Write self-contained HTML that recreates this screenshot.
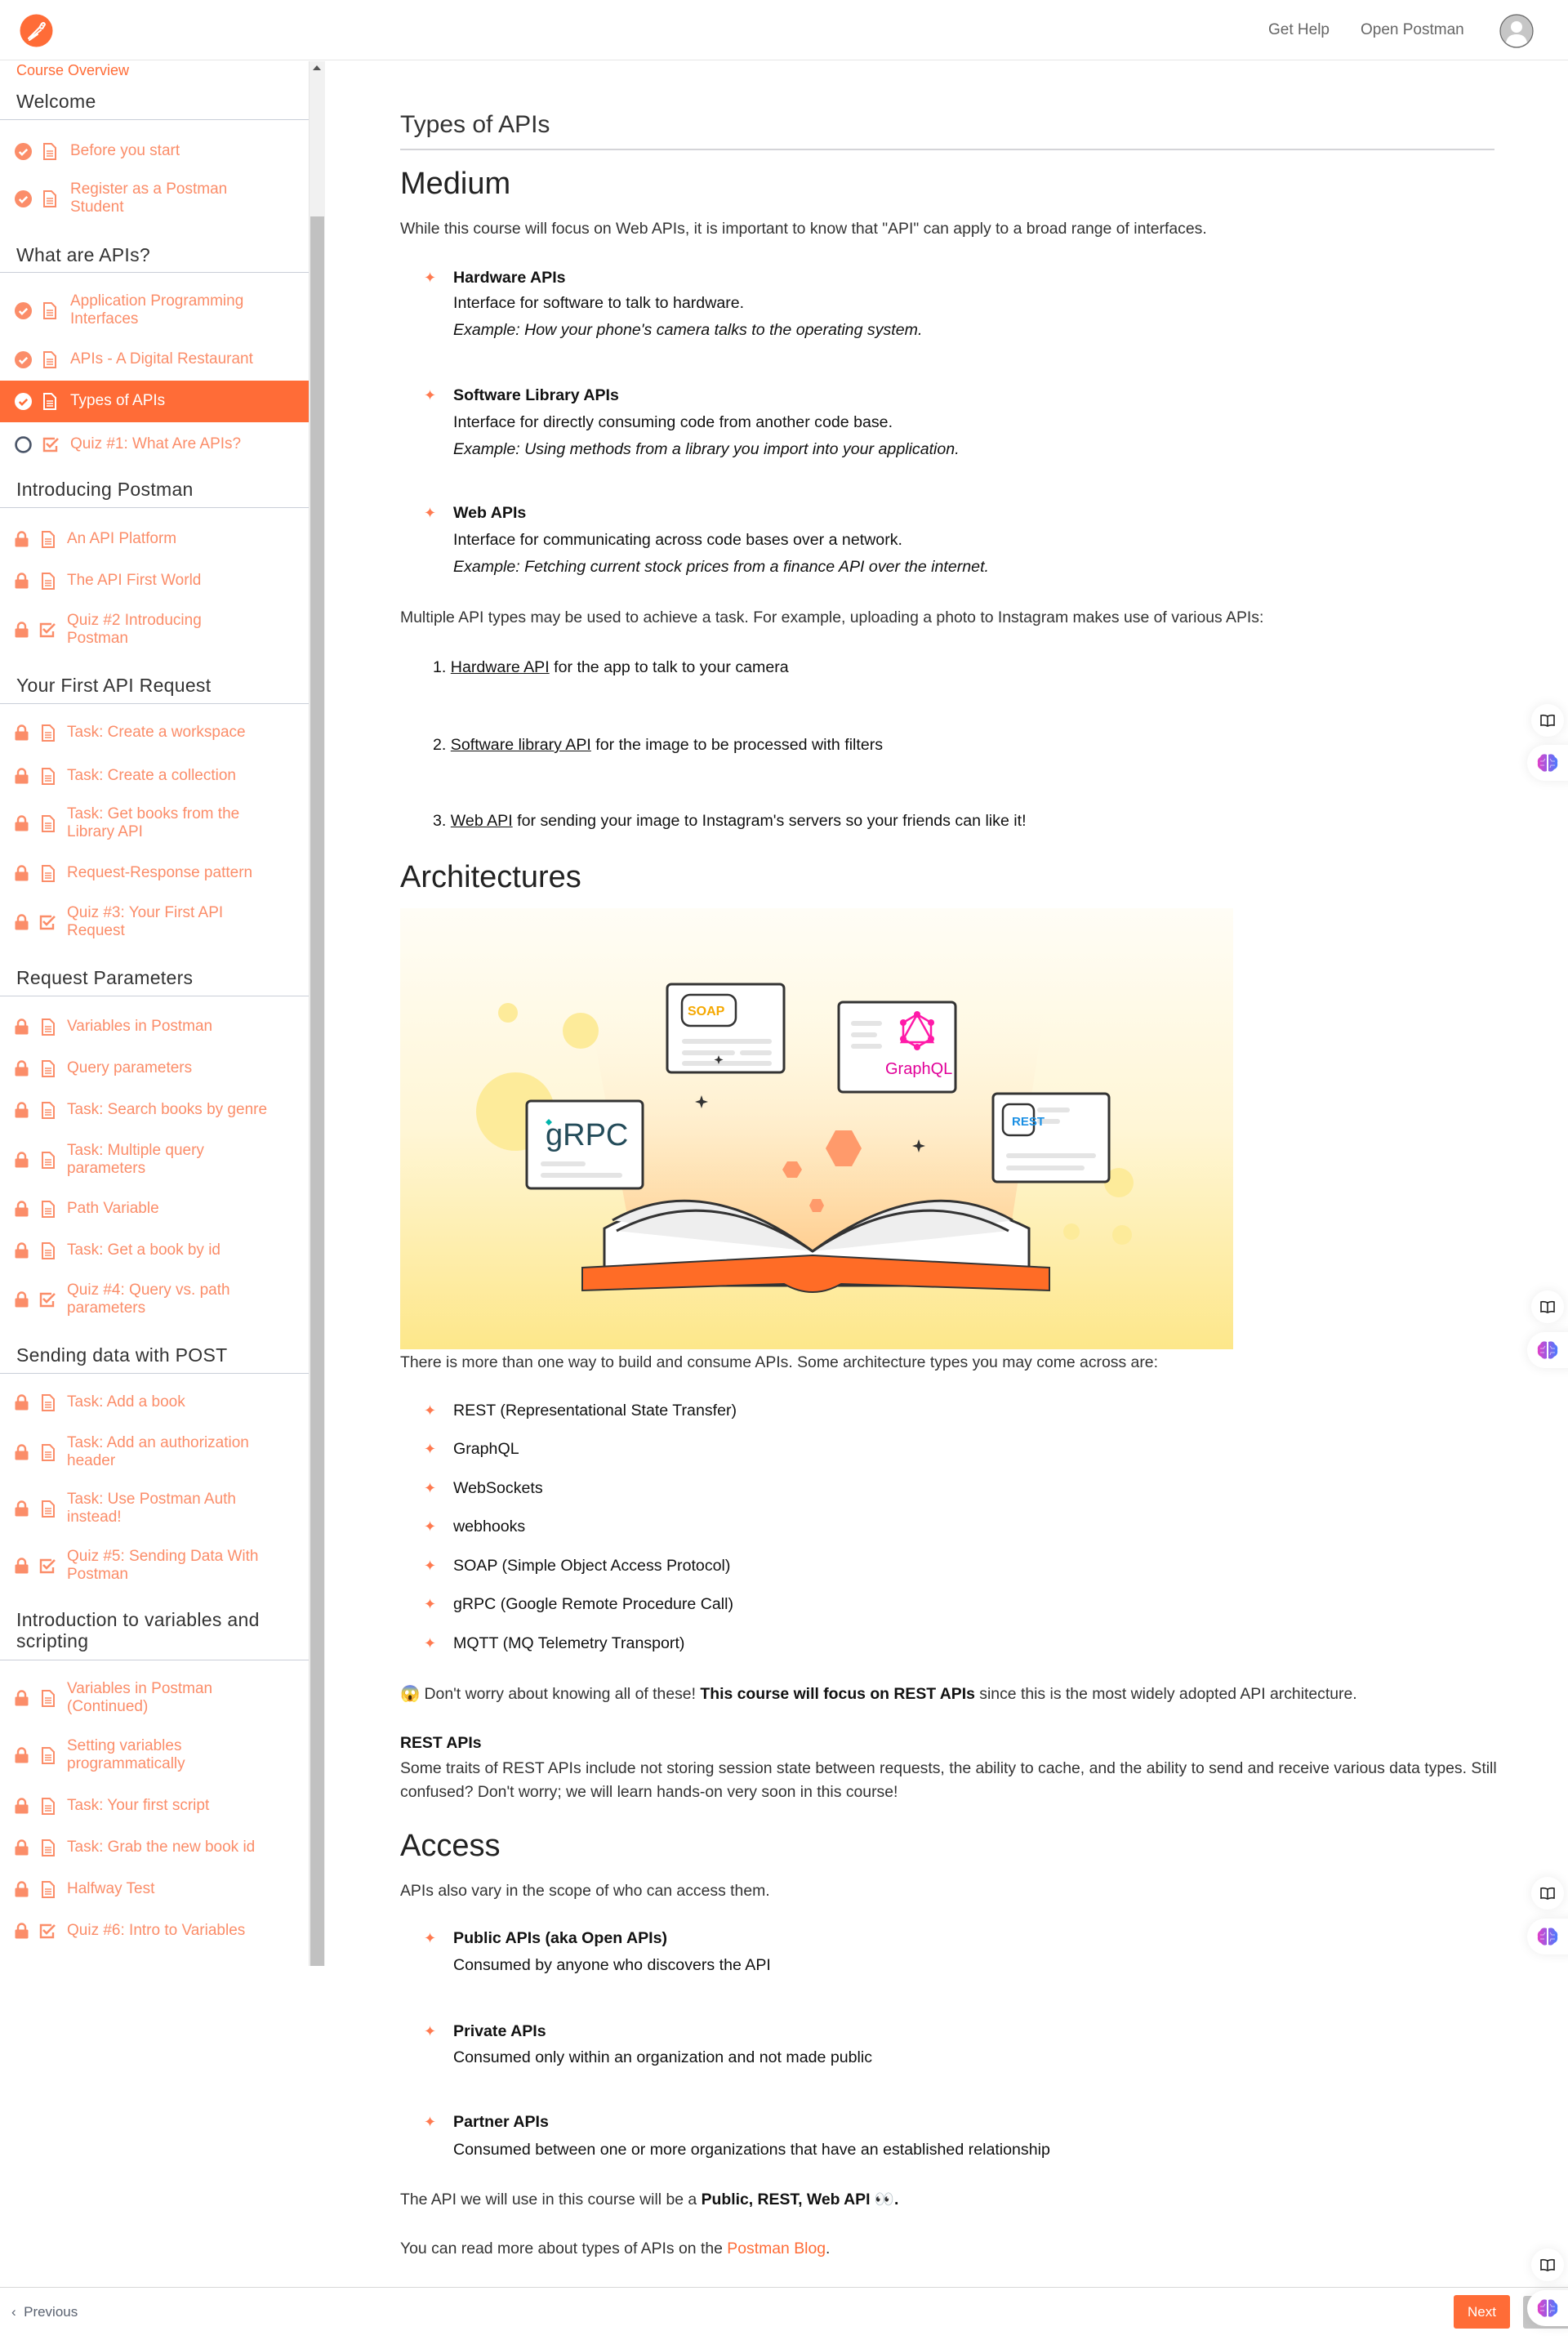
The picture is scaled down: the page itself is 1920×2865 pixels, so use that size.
<!DOCTYPE html>
<html><head><meta charset="utf-8">
<style>
*{margin:0;padding:0;box-sizing:border-box}
html,body{width:1920px;height:2865px;overflow:hidden;background:#fff;font-family:"Liberation Sans",sans-serif;color:#222;position:relative}
.a{position:absolute;white-space:nowrap}
.hdr{position:absolute;left:0;top:0;width:1920px;height:74px;border-bottom:1px solid #e6e6e6;background:#fff}
.it{position:absolute;left:0;width:378px;display:flex;align-items:center;color:#fb8d69;font-size:19px;line-height:22px}
.it .ic1{position:absolute;left:18px}
.it .ic2{position:absolute;left:50px}
.it .tx{position:absolute;left:82px;white-space:normal;width:248px}
.it.ck .ic2{left:52px}
.it.ck .tx{left:86px}
.sh{position:absolute;left:20px;font-size:23px;color:#333;line-height:28px;white-space:nowrap;letter-spacing:.3px}
.sl{position:absolute;left:0;width:378px;height:1px;background:#c9ced8}
.c{position:absolute;left:490px;font-size:19.4px;line-height:24px;color:#222;white-space:nowrap}
.h2{font-size:38px;line-height:44px;color:#222}
.st{position:absolute;left:519px;color:#ff7a50;font-size:18px;line-height:24px}
.li{position:absolute;left:555px;font-size:19.6px;line-height:24px;white-space:nowrap;color:#111}
.ex{font-style:italic}
</style></head><body>

<div class="hdr">
 <svg class="a" style="left:24px;top:17px" width="41" height="41" viewBox="0 0 41 41"><circle cx="20.5" cy="20.5" r="20" fill="#ff6c37"/><path d="M11 30 L24 17 M24 17 L27 12 Q30 10 31 13 L28 18 Z M14 29 L26 20 M12 32 L22 25" stroke="#fff" stroke-width="2" fill="none" stroke-linecap="round"/><circle cx="29" cy="12.5" r="2" fill="none" stroke="#fff" stroke-width="1.2"/></svg>
 <div class="a" style="left:1553px;top:26px;font-size:19px;color:#666">Get Help</div>
 <div class="a" style="left:1666px;top:26px;font-size:19px;color:#666">Open Postman</div>
 <svg class="a" style="left:1836px;top:17px" width="42" height="42" viewBox="0 0 42 42"><circle cx="21" cy="21" r="20" fill="#c6c6c6" stroke="#666" stroke-width="1.2"/><circle cx="21" cy="16" r="7" fill="#fff"/><path d="M8 35 Q10 25 21 25 Q32 25 34 35 Q28 40 21 40 Q14 40 8 35Z" fill="#fff"/></svg>
</div>

<div class="a" style="left:378px;top:75px;width:20px;height:2332px;background:#f1f1f1;border-left:1px solid #e5e5e5"></div>
<div class="a" style="left:380px;top:265px;width:17px;height:2142px;background:#c1c1c1"></div>
<div class="a" style="left:383px;top:80px;width:0;height:0;border-left:5px solid transparent;border-right:5px solid transparent;border-bottom:6px solid #555"></div>

<div class="a" style="left:20px;top:75px;font-size:18px;color:#ff6c37;line-height:22px">Course Overview</div>

<div class="sh" style="top:110px">Welcome</div><div class="sl" style="top:146px"></div>
<div class="sh" style="top:298px">What are APIs?</div><div class="sl" style="top:333px"></div>
<div class="sh" style="top:585px">Introducing Postman</div><div class="sl" style="top:621px"></div>
<div class="sh" style="top:825px">Your First API Request</div><div class="sl" style="top:861px"></div>
<div class="sh" style="top:1183px">Request Parameters</div><div class="sl" style="top:1219px"></div>
<div class="sh" style="top:1645px">Sending data with POST</div><div class="sl" style="top:1681px"></div>
<div class="sh" style="top:1970px;line-height:26px">Introduction to variables and<br>scripting</div><div class="sl" style="top:2032px"></div>

<div class="a" style="left:0;top:466px;width:378px;height:51px;background:#ff6c37"></div>

<div id="items"></div>
<div class="it ck" style="top:173px;height:24px"><svg class="ic1" width="21" height="21" viewBox="0 0 20 20"><circle cx="10" cy="10" r="10" fill="#fb8d69"/><path d="M5.5 10.5l3 3 6-6" stroke="#fff" stroke-width="2.4" fill="none"/></svg><svg class="ic2" width="18" height="21" viewBox="0 0 18 21"><path d="M2 1h9l5 5v14H2z" fill="none" stroke="#fb8d69" stroke-width="2"/><path d="M5 10h8M5 13h8M5 16h8" stroke="#fb8d69" stroke-width="1.5"/></svg><span class="tx">Before you start</span></div>
<div class="it ck" style="top:221px;height:44px"><svg class="ic1" width="21" height="21" viewBox="0 0 20 20"><circle cx="10" cy="10" r="10" fill="#fb8d69"/><path d="M5.5 10.5l3 3 6-6" stroke="#fff" stroke-width="2.4" fill="none"/></svg><svg class="ic2" width="18" height="21" viewBox="0 0 18 21"><path d="M2 1h9l5 5v14H2z" fill="none" stroke="#fb8d69" stroke-width="2"/><path d="M5 10h8M5 13h8M5 16h8" stroke="#fb8d69" stroke-width="1.5"/></svg><span class="tx">Register as a Postman Student</span></div>
<div class="it ck" style="top:358px;height:44px"><svg class="ic1" width="21" height="21" viewBox="0 0 20 20"><circle cx="10" cy="10" r="10" fill="#fb8d69"/><path d="M5.5 10.5l3 3 6-6" stroke="#fff" stroke-width="2.4" fill="none"/></svg><svg class="ic2" width="18" height="21" viewBox="0 0 18 21"><path d="M2 1h9l5 5v14H2z" fill="none" stroke="#fb8d69" stroke-width="2"/><path d="M5 10h8M5 13h8M5 16h8" stroke="#fb8d69" stroke-width="1.5"/></svg><span class="tx">Application Programming Interfaces</span></div>
<div class="it ck" style="top:428px;height:24px"><svg class="ic1" width="21" height="21" viewBox="0 0 20 20"><circle cx="10" cy="10" r="10" fill="#fb8d69"/><path d="M5.5 10.5l3 3 6-6" stroke="#fff" stroke-width="2.4" fill="none"/></svg><svg class="ic2" width="18" height="21" viewBox="0 0 18 21"><path d="M2 1h9l5 5v14H2z" fill="none" stroke="#fb8d69" stroke-width="2"/><path d="M5 10h8M5 13h8M5 16h8" stroke="#fb8d69" stroke-width="1.5"/></svg><span class="tx" style="width:260px">APIs - A Digital Restaurant</span></div>
<div class="it ck" style="top:479px;height:24px;color:#fff"><svg class="ic1" width="21" height="21" viewBox="0 0 20 20"><circle cx="10" cy="10" r="10" fill="#fff"/><path d="M5.5 10.5l3 3 6-6" stroke="#ff6c37" stroke-width="2.4" fill="none"/></svg><svg class="ic2" width="18" height="21" viewBox="0 0 18 21"><path d="M2 1h9l5 5v14H2z" fill="none" stroke="#fff" stroke-width="2"/><path d="M5 10h8M5 13h8M5 16h8" stroke="#fff" stroke-width="1.5"/></svg><span class="tx">Types of APIs</span></div>
<div class="it ck" style="top:532px;height:24px"><svg class="ic1" width="21" height="21" viewBox="0 0 20 20"><circle cx="10" cy="10" r="8.5" fill="none" stroke="#4a5568" stroke-width="2.5"/></svg><svg class="ic2" width="22" height="20" viewBox="0 0 22 20"><path d="M15 3H2v15h15v-6" fill="none" stroke="#fb8d69" stroke-width="2.4"/><path d="M5 9l4 4 10-10" fill="none" stroke="#fb8d69" stroke-width="2.6"/></svg><span class="tx">Quiz #1: What Are APIs?</span></div>

<script>
var L='<svg class="ic1" width="17" height="20" viewBox="0 0 17 20"><path d="M4 9V6a4.5 4.5 0 0 1 9 0v3" fill="none" stroke="#fb8d69" stroke-width="2.4"/><rect x="0.5" y="8.5" width="16" height="11" rx="1.5" fill="#fb8d69"/></svg>';
var D='<svg class="ic2" width="18" height="21" viewBox="0 0 18 21"><path d="M2 1h9l5 5v14H2z" fill="none" stroke="#fb8d69" stroke-width="2"/><path d="M5 10h8M5 13h8M5 16h8" stroke="#fb8d69" stroke-width="1.5"/></svg>';
var Q='<svg class="ic2" style="left:48px" width="22" height="20" viewBox="0 0 22 20"><path d="M15 3H2v15h15v-6" fill="none" stroke="#fb8d69" stroke-width="2.4"/><path d="M5 9l4 4 10-10" fill="none" stroke="#fb8d69" stroke-width="2.6"/></svg>';
var items=[[660,"An API Platform"],[711,"The API First World"],[771,"Quiz #2 Introducing Postman",1,1],[897,"Task: Create a workspace"],[950,"Task: Create a collection"],[1008,"Task: Get books from the Library API",0,1],[1069,"Request-Response pattern"],[1129,"Quiz #3: Your First API Request",1,1],[1257,"Variables in Postman"],[1308,"Query parameters"],[1359,"Task: Search books by genre"],[1420,"Task: Multiple query parameters",0,1],[1480,"Path Variable"],[1531,"Task: Get a book by id"],[1591,"Quiz #4: Query vs. path parameters",1,1],[1717,"Task: Add a book"],[1778,"Task: Add an authorization header",0,1],[1847,"Task: Use Postman Auth instead!",0,1],[1917,"Quiz #5: Sending Data With Postman",1,1],[2079,"Variables in Postman (Continued)",0,1],[2149,"Setting variables programmatically",0,1],[2211,"Task: Your first script"],[2262,"Task: Grab the new book id"],[2313,"Halfway Test"],[2364,"Quiz #6: Intro to Variables",1]];
var h='';items.forEach(function(i){var hh=i[3]?44:24;h+='<div class="it" style="top:'+(i[0]-hh/2)+'px;height:'+hh+'px">'+L+(i[2]?Q:D)+'<span class="tx" style="width:'+(i[3]?236:280)+'px">'+i[1]+'</span></div>';});
document.getElementById('items').innerHTML=h;
</script>

<div class="c" style="top:135px;font-size:30px;line-height:36px;color:#333">Types of APIs</div>
<div class="a" style="left:490px;top:182px;width:1340px;height:2px;background:#d4d4d8"></div>
<div class="c h2" style="top:203px">Medium</div>
<div class="c" style="top:268px;color:#333">While this course will focus on Web APIs, it is important to know that "API" can apply to a broad range of interfaces.</div>

<div class="st" style="top:328px">✦</div><div class="li" style="top:328px;font-weight:bold">Hardware APIs</div>
<div class="li" style="top:359px">Interface for software to talk to hardware.</div>
<div class="li ex" style="top:392px">Example: How your phone's camera talks to the operating system.</div>
<div class="st" style="top:472px">✦</div><div class="li" style="top:472px;font-weight:bold">Software Library APIs</div>
<div class="li" style="top:505px">Interface for directly consuming code from another code base.</div>
<div class="li ex" style="top:538px">Example: Using methods from a library you import into your application.</div>
<div class="st" style="top:616px">✦</div><div class="li" style="top:616px;font-weight:bold">Web APIs</div>
<div class="li" style="top:649px">Interface for communicating across code bases over a network.</div>
<div class="li ex" style="top:682px">Example: Fetching current stock prices from a finance API over the internet.</div>

<div class="c" style="top:744px;color:#333">Multiple API types may be used to achieve a task. For example, uploading a photo to Instagram makes use of various APIs:</div>
<div class="li" style="left:530px;top:805px">1. <u>Hardware API</u> for the app to talk to your camera</div>
<div class="li" style="left:530px;top:900px">2. <u>Software library API</u> for the image to be processed with filters</div>
<div class="li" style="left:530px;top:993px">3. <u>Web API</u> for sending your image to Instagram's servers so your friends can like it!</div>

<div class="c h2" style="top:1052px">Architectures</div>

<svg class="a" style="left:490px;top:1112px" width="1020" height="540" viewBox="0 0 1020 540">
<defs>
<linearGradient id="bg" x1="0" y1="0" x2="0" y2="1"><stop offset="0" stop-color="#fffdf6"/><stop offset=".5" stop-color="#fff6d6"/><stop offset="1" stop-color="#fde78a"/></linearGradient>
<linearGradient id="bm" x1="0" y1="0" x2="0" y2="1"><stop offset="0" stop-color="#fff8ea" stop-opacity="0"/><stop offset="1" stop-color="#ffc98a"/></linearGradient>
</defs>
<rect width="1020" height="540" fill="url(#bg)"/>
<path d="M230 120 L790 120 L740 440 L290 440Z" fill="url(#bm)"/>
<g fill="#fdeb9a"><circle cx="132" cy="128" r="12"/><circle cx="221" cy="150" r="22"/><circle cx="141" cy="249" r="48"/><circle cx="880" cy="336" r="18"/><circle cx="822" cy="396" r="10"/><circle cx="884" cy="400" r="12"/></g>
<g stroke="#333" stroke-width="3" fill="#fff">
<rect x="327" y="93" width="143" height="108" rx="5"/>
<rect x="537" y="115" width="143" height="110" rx="5"/>
<rect x="155" y="236" width="142" height="107" rx="5"/>
<rect x="726" y="227" width="142" height="108" rx="5"/>
</g>
<g fill="#e4e4e4"><rect x="345" y="160" width="110" height="6" rx="3"/><rect x="345" y="174" width="65" height="6" rx="3"/><rect x="416" y="174" width="39" height="6" rx="3"/><rect x="345" y="187" width="110" height="6" rx="3"/>
<rect x="552" y="138" width="38" height="6" rx="3"/><rect x="552" y="152" width="32" height="6" rx="3"/><rect x="552" y="166" width="38" height="6" rx="3"/>
<rect x="172" y="310" width="55" height="6" rx="3"/><rect x="172" y="324" width="100" height="6" rx="3"/>
<rect x="780" y="244" width="40" height="6" rx="3"/><rect x="780" y="258" width="28" height="6" rx="3"/><rect x="742" y="300" width="110" height="6" rx="3"/><rect x="742" y="315" width="96" height="6" rx="3"/></g>
<rect x="345" y="106" width="66" height="38" rx="10" fill="none" stroke="#333" stroke-width="2.5"/>
<text x="352" y="131" font-family="Liberation Sans" font-weight="bold" font-size="16" fill="#f5a800">SOAP</text>
<g stroke="#ff1aa8" stroke-width="2.5" fill="none"><path d="M633 130 L614 164 L652 164 Z"/><path d="M633 130 L650 140 L650 160 L633 170 L616 160 L616 140 Z"/></g>
<g fill="#ff1aa8"><circle cx="633" cy="130" r="4"/><circle cx="650" cy="140" r="4"/><circle cx="650" cy="160" r="4"/><circle cx="633" cy="170" r="4"/><circle cx="616" cy="160" r="4"/><circle cx="616" cy="140" r="4"/></g>
<text x="594" y="203" font-family="Liberation Sans" font-size="20" fill="#e10098">GraphQL</text>
<text x="178" y="290" font-family="Liberation Sans" font-size="38" fill="#244c5a">gRPC</text>
<path d="M178 262l4-4 4 4-4 4z" fill="#00b4ab"/>
<rect x="738" y="240" width="38" height="38" rx="8" fill="#fff" stroke="#333" stroke-width="2.5"/>
<text x="749" y="266" font-family="Liberation Sans" font-weight="bold" font-size="15" fill="#1a8fe3">REST</text>
<path d="M369 229l2 6 6 2-6 2-2 6-2-6-6-2 6-2z M390 180l1.5 4 4 1.5-4 1.5-1.5 4-1.5-4-4-1.5 4-1.5z M635 283l2 6 6 2-6 2-2 6-2-6-6-2 6-2z" fill="#333"/>
<g fill="#ff9a6b"><path d="M533 272 L553 272 L565 294 L553 316 L533 316 L521 294Z"/><path d="M474 310 L486 310 L492 320 L486 330 L474 330 L468 320Z"/><path d="M505 356 L515 356 L519 364 L515 372 L505 372 L501 364Z"/></g>
<path d="M250 392 Q360 330 505 420 Q650 330 770 392 L770 462 L250 462Z" fill="#fff" stroke="#333" stroke-width="3"/>
<path d="M260 382 Q370 320 505 420 M750 382 Q640 320 505 420 M265 395 Q380 335 505 420 M745 395 Q630 335 505 420" stroke="#333" stroke-width="3" fill="#eee"/>
<path d="M223 440 L505 425 L795 440 L795 468 L540 460 Q505 480 470 460 L223 468Z" fill="#ff6c26" stroke="#333" stroke-width="2"/>
</svg>

<div class="c" style="top:1656px;color:#333">There is more than one way to build and consume APIs. Some architecture types you may come across are:</div>
<div class="st" style="top:1715px">✦</div><div class="li" style="top:1715px">REST (Representational State Transfer)</div>
<div class="st" style="top:1762px">✦</div><div class="li" style="top:1762px">GraphQL</div>
<div class="st" style="top:1810px">✦</div><div class="li" style="top:1810px">WebSockets</div>
<div class="st" style="top:1857px">✦</div><div class="li" style="top:1857px">webhooks</div>
<div class="st" style="top:1905px">✦</div><div class="li" style="top:1905px">SOAP (Simple Object Access Protocol)</div>
<div class="st" style="top:1952px">✦</div><div class="li" style="top:1952px">gRPC (Google Remote Procedure Call)</div>
<div class="st" style="top:2000px">✦</div><div class="li" style="top:2000px">MQTT (MQ Telemetry Transport)</div>

<div class="c" style="top:2062px;color:#333">😱 Don't worry about knowing all of these! <b style="color:#111">This course will focus on REST APIs</b> since this is the most widely adopted API architecture.</div>
<div class="c" style="top:2122px;font-weight:bold;color:#111">REST APIs</div>
<div class="c" style="top:2153px;color:#333">Some traits of REST APIs include not storing session state between requests, the ability to cache, and the ability to send and receive various data types. Still</div>
<div class="c" style="top:2182px;color:#333">confused? Don't worry; we will learn hands-on very soon in this course!</div>

<div class="c h2" style="top:2238px">Access</div>
<div class="c" style="top:2303px;color:#333">APIs also vary in the scope of who can access them.</div>
<div class="st" style="top:2361px">✦</div><div class="li" style="top:2361px;font-weight:bold">Public APIs (aka Open APIs)</div>
<div class="li" style="top:2394px">Consumed by anyone who discovers the API</div>
<div class="st" style="top:2475px">✦</div><div class="li" style="top:2475px;font-weight:bold">Private APIs</div>
<div class="li" style="top:2507px">Consumed only within an organization and not made public</div>
<div class="st" style="top:2586px">✦</div><div class="li" style="top:2586px;font-weight:bold">Partner APIs</div>
<div class="li" style="top:2620px">Consumed between one or more organizations that have an established relationship</div>
<div class="c" style="top:2681px;color:#333">The API we will use in this course will be a <b style="color:#111">Public, REST, Web API 👀.</b></div>
<div class="c" style="top:2741px;color:#333">You can read more about types of APIs on the <span style="color:#ff6c37">Postman Blog</span>.</div>

<script>
function brain(id){return '<svg style="position:absolute;left:12px;top:10px" width="26" height="24" viewBox="0 0 26 24"><defs><linearGradient id="'+id+'" x1="0" x2="1"><stop offset="0" stop-color="#e040c8"/><stop offset="1" stop-color="#4a7bff"/></linearGradient></defs><path d="M12 2Q6 0 4 5Q0 7 1 12Q0 18 5 20Q8 24 12 22ZM14 2Q20 0 22 5Q26 7 25 12Q26 18 21 20Q18 24 14 22Z" fill="url(#'+id+')"/><path d="M4 10h4l2-3M4 15h5M22 10h-4l-2-3M22 15h-5l-1 3" stroke="#fff" stroke-opacity=".6" stroke-width="1" fill="none"/></svg>';}
var f='';[[882,934],[1600,1653],[2318,2371],[2773,2826]].forEach(function(p){
f+='<div class="a" style="left:1875px;top:'+(p[0]-20)+'px;width:40px;height:40px;border-radius:50%;background:#fff;box-shadow:0 0 14px rgba(0,0,0,.08)"><svg style="position:absolute;left:11px;top:12px" width="18" height="16" viewBox="0 0 18 16"><path d="M9 3Q5 1 1 2V14Q5 13 9 15Q13 13 17 14V2Q13 1 9 3ZM9 3V15" fill="none" stroke="#222" stroke-width="1.6"/></svg></div>';
if(p[1]!=2826)f+='<div class="a" style="left:1870px;top:'+(p[1]-22)+'px;width:60px;height:44px;border-radius:22px 0 0 22px;background:#fff;box-shadow:0 0 14px rgba(0,0,0,.08)">'+brain('g'+p[1])+'</div>';});
document.write(f);
</script>

<div class="a" style="left:0;top:2800px;width:1920px;height:1px;background:#d8d8d8"></div>
<div class="a" style="left:14px;top:2821px;font-size:17px;color:#5a6270">‹&nbsp; Previous</div>
<div class="a" style="left:1780px;top:2810px;width:69px;height:41px;background:#ff6c37;border-radius:3px;color:#fff;font-size:17px;line-height:41px;text-align:center">Next</div>
<div class="a" style="left:1865px;top:2811px;width:55px;height:40px;background:#c6c6c6;border-radius:3px 0 0 3px"></div>
<div class="a" style="left:1870px;top:2804px;width:60px;height:44px;border-radius:22px 0 0 22px;background:#fff;box-shadow:0 0 14px rgba(0,0,0,.1)"><script>document.write(brain('gf'))</script></div>
</body></html>
